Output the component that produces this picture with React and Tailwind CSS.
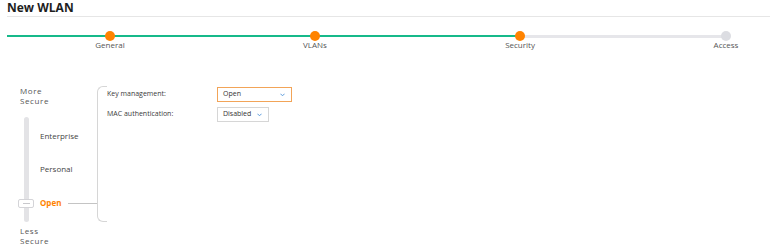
import React from 'react'

// ── Stepper ──────────────────────────────────────────────────────────────────
const STEPS = [
  { label: 'General', done: true, before: 103 },
  { label: 'VLANs', done: true, before: 205 },
  { label: 'Security', done: true, before: 205 },
  { label: 'Access', done: false, before: 206 },
]

function Stepper() {
  return (
    <div className="flex items-start px-[7px] mt-[14px]">
      {STEPS.map((s) => (
        <React.Fragment key={s.label}>
          <div
            className={`shrink-0 ${
              s.done ? 'h-[2px] mt-[4px] bg-[#17b98a]' : 'h-[3px] mt-[3.5px] bg-[#e6e6ea]'
            }`}
            style={{ width: s.before }}
          />
          <div className="w-0 flex flex-col items-center relative z-10">
            <span
              className={`block w-[10px] h-[10px] rounded-full shrink-0 ${
                s.done ? 'bg-[#ff8300]' : 'bg-[#dcdde2]'
              }`}
            />
            <span className="text-[8px] leading-[8px] text-[#555] whitespace-nowrap">{s.label}</span>
          </div>
        </React.Fragment>
      ))}
    </div>
  )
}

function Chevron() {
  return (
    <svg width="5" height="4" viewBox="0 0 5 4" fill="none" stroke="#5b9bdc" strokeWidth="1" strokeLinecap="round" strokeLinejoin="round">
      <polyline points="0.7 1 2.5 2.8 4.3 1" />
    </svg>
  )
}

function Select({ value, width, active }) {
  return (
    <div
      className={`h-[15px] flex items-center justify-between pl-[5px] pr-[6px] border bg-white text-[7px] text-[#333] ${
        active ? 'border-[#f2a458]' : 'border-[#d6d6d6]'
      }`}
      style={{ width }}
    >
      <span>{value}</span>
      <Chevron />
    </div>
  )
}

// ── Security level slider ────────────────────────────────────────────────────
function SecuritySlider() {
  return (
    <div className="w-[79px] shrink-0 flex flex-col">
      <div className="pl-[2px] text-[8px] leading-[10px] tracking-[0.6px] text-[#555]">
        More<br />Secure
      </div>
      <div className="mt-[11px] h-[105px] flex">
        <div className="relative w-[16px] shrink-0">
          <div className="mx-auto w-[5px] h-full bg-[#e3e3e6] rounded-sm" />
          <div className="absolute top-[82px] left-0 w-[16px] h-[9px] bg-white border border-[#d4d4d8] rounded-[2px] flex items-center justify-center">
            <span className="w-[7px] h-px bg-[#c8c8cc]" />
          </div>
        </div>
        <div className="ml-[6px] flex-1 flex flex-col pt-[14px] text-[8px] leading-[10px] text-[#444]">
          <span>Enterprise</span>
          <span className="mt-[23px]">Personal</span>
          <div className="mt-[24px] flex items-center">
            <span className="font-bold text-[#ff8300]">Open</span>
            <span className="ml-[7px] flex-1 h-px bg-[#c4c4c4]" />
          </div>
        </div>
      </div>
      <div className="mt-[4px] pl-[2px] text-[8px] leading-[10px] tracking-[0.6px] text-[#555]">
        Less<br />Secure
      </div>
    </div>
  )
}

export default function App() {
  return (
    <div
      className="w-[770px] h-[245px] bg-white overflow-hidden flex flex-col"
      style={{ fontFamily: '"Open Sans", "Liberation Sans", sans-serif' }}
    >
      {/* Header */}
      <div className="ml-[7px] h-[18px] border-b border-[#e6e6e6]">
        <h1 className="text-[12px] leading-[16px] font-bold text-[#1e1e1e]">New WLAN</h1>
      </div>

      <Stepper />

      {/* Body */}
      <div className="mt-[37px] pl-[18px] flex items-start">
        <SecuritySlider />
        <div className="flex">
          <div className="w-[10px] h-[136px] border-l border-y border-[#d6d6d6] rounded-l-[6px]" />
          <div className="pt-[1px] text-[7px] text-[#3a3a3a]">
            <div className="flex items-center">
              <span className="w-[110px]">Key management:</span>
              <Select value="Open" width={75} active />
            </div>
            <div className="flex items-center mt-[5px]">
              <span className="w-[110px]">MAC authentication:</span>
              <Select value="Disabled" width={52} />
            </div>
          </div>
        </div>
      </div>
    </div>
  )
}
